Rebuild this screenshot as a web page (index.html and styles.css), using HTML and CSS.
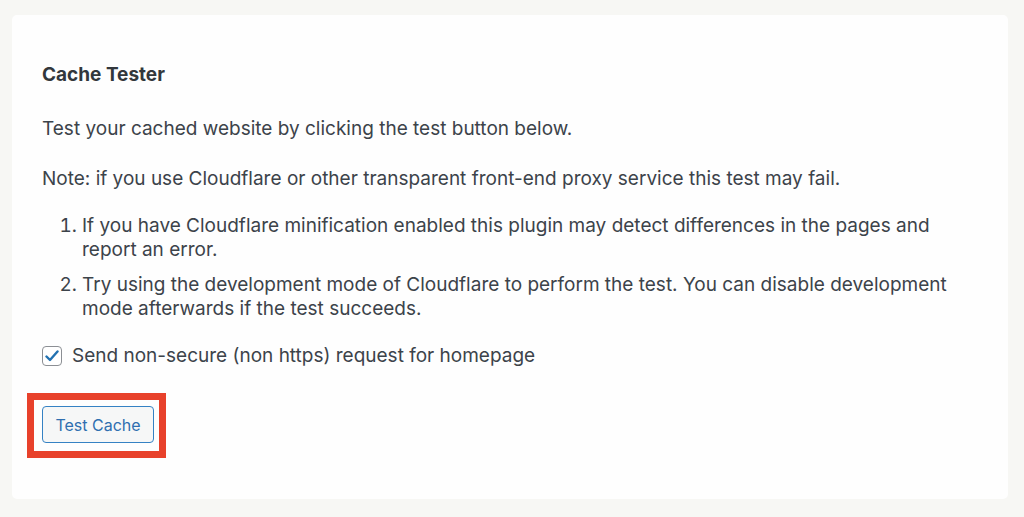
FILE: index.html
```html
<!DOCTYPE html>
<html lang="en">

<head>
    <meta charset="UTF-8">
    <meta name="viewport" content="width=device-width, initial-scale=1.0">
    <title>Cache Tester</title>
    <link rel="stylesheet" href="styles.css">
</head>

<body>
    <div class="card">
        <h2 class="title">Cache Tester</h2>
        <p>Test your cached website by clicking the test button below.</p>
        <p>Note: if you use Cloudflare or other transparent front-end proxy service this test may fail.</p>
        <ol class="notes">
            <li>If you have Cloudflare minification enabled this plugin may detect differences in the pages and report an error.</li>
            <li>Try using the development mode of Cloudflare to perform the test. You can disable development mode afterwards if the test succeeds.</li>
        </ol>
        <label class="check">
            <span class="box">
                <svg width="14" height="12" viewBox="0 0 14 12">
                    <path d="M1.5 6.5 L5 10 L12.5 1.5" fill="none" stroke="#2271b1" stroke-width="2.4" stroke-linecap="round" stroke-linejoin="round" />
                </svg>
            </span>
            Send non-secure (non https) request for homepage
        </label>
        <div class="actions">
            <span class="btnWrap">
                <button class="btn">Test Cache</button>
                <span class="highlight"></span>
            </span>
        </div>
    </div>
</body>

</html>
```

FILE: styles.css
```css
* {
    margin: 0;
    padding: 0;
    box-sizing: border-box;
}

body {
    font-family: Inter, "Open Sans", sans-serif;
    background-color: #f7f7f4;
    color: #3c434a;
    font-size: 19px;
    line-height: 24px;
    padding: 15px 16px 18px 12px;
}

.card {
    background-color: #fefefe;
    border-radius: 5px;
    height: 484px;
    padding: 48px 30px 0 30px;
}

.title {
    font-size: 19px;
    font-weight: 700;
    color: #32373c;
    margin-bottom: 30px;
}

.card p {
    margin-bottom: 26px;
}

.notes {
    padding-left: 40px;
    margin-top: -3px;
    margin-bottom: 23px;
}

.notes li {
    margin-top: 11px;
}

.notes li:first-child {
    margin-top: 0;
}

.check {
    display: flex;
    align-items: center;
    gap: 10px;
}

.box {
    width: 20px;
    height: 20px;
    border: 1px solid #8c8f94;
    border-radius: 4px;
    display: flex;
    align-items: center;
    justify-content: center;
    background: #fff;
}

.actions {
    margin-top: 38px;
}

.btnWrap {
    position: relative;
    display: inline-block;
}

.btn {
    width: 112px;
    height: 37px;
    border: 1px solid #3582c4;
    border-radius: 4px;
    background-color: #f6f7f7;
    color: #2f6fb0;
    font-family: Inter, "Open Sans", sans-serif;
    font-size: 16px;
    vertical-align: top;
}

.highlight {
    position: absolute;
    left: -15px;
    top: -13px;
    width: 139px;
    height: 65px;
    border: 7px solid #e8412b;
}
```
